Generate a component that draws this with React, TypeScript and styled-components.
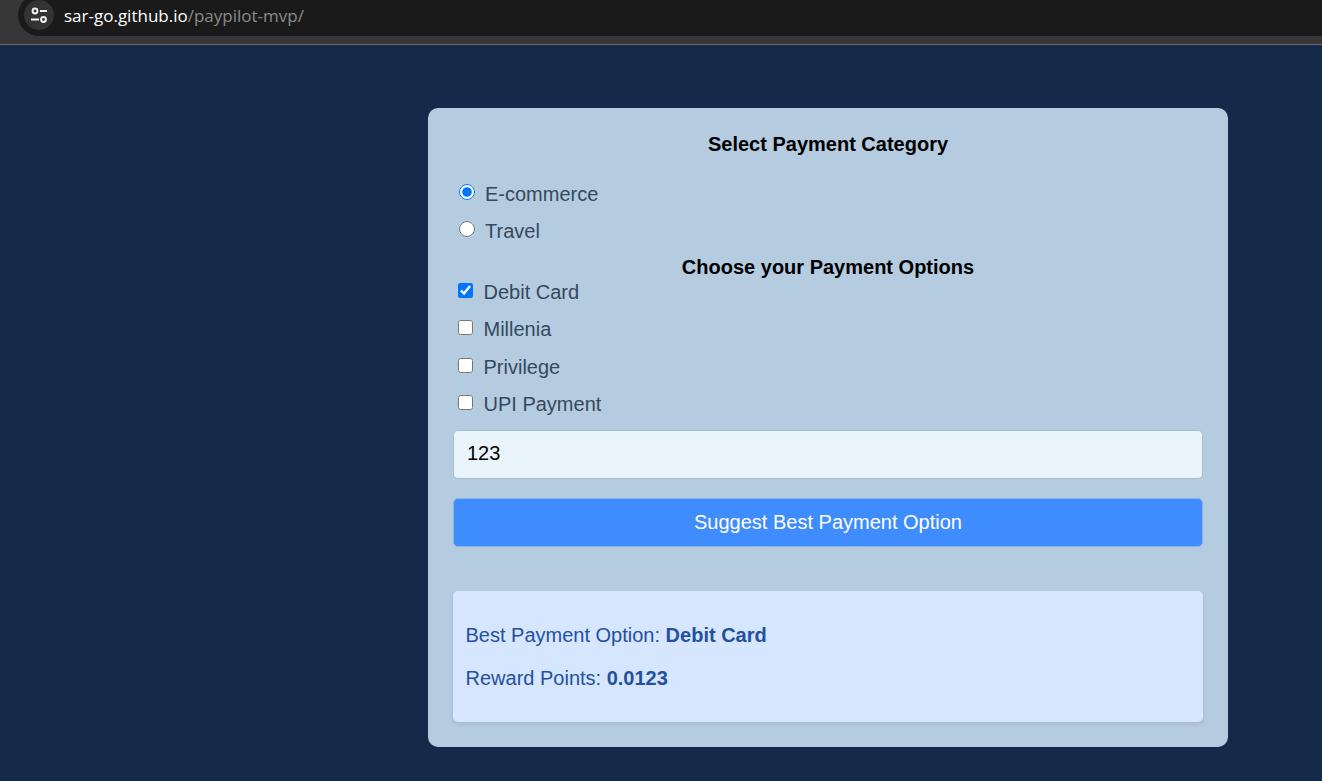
import React from 'react';
import styled, { createGlobalStyle } from 'styled-components';

const GlobalStyle = createGlobalStyle`
  html, body {
    margin: 0;
    padding: 0;
    height: 100%;
    background: #152a4a;
    overflow: hidden;
    font-family: "Liberation Sans", Arial, sans-serif;
  }
`;

const BrowserChrome = styled.div`
  height: 45px;
  box-sizing: border-box;
  background: #373737;
  border-bottom: 1px solid #6a6a6a;
  overflow: hidden;
  padding-left: 18px;
`;

const AddressPill = styled.div`
  height: 42px;
  margin-top: -6px;
  box-sizing: border-box;
  background: #1a1a1a;
  border-radius: 21px 0 0 21px;
  display: flex;
  align-items: center;
  padding-left: 6px;
  gap: 10px;
  font-family: "Open Sans", "Liberation Sans", sans-serif;
  font-size: 17px;
`;

const SiteIcon = styled.div`
  width: 30px;
  height: 30px;
  border-radius: 50%;
  background: #333333;
  display: flex;
  align-items: center;
  justify-content: center;
`;

const Url = styled.span`
  color: #ffffff;
  span {
    color: #8a8a8a;
  }
`;

const Page = styled.main`
  padding: 63px 0 0 428px;
`;

const Card = styled.section`
  width: 800px;
  height: 639px;
  box-sizing: border-box;
  background: #b5cbdf;
  border-radius: 10px;
  padding: 25px;
  color: #34495e;
  font-size: 20px;
`;

const Heading = styled.h2`
  margin: 0;
  font-size: 20px;
  line-height: 23px;
  font-weight: bold;
  color: #000000;
  text-align: center;
`;

const RadioGroup = styled.div`
  margin: 27px 0 13px;
  display: flex;
  flex-direction: column;
  gap: 14px;
`;

const CheckGroup = styled.div`
  margin: 1.5px 0 14px;
  display: flex;
  flex-direction: column;
  gap: 14.5px;
`;

const OptionRow = styled.label`
  display: flex;
  align-items: center;
  height: 23px;
  line-height: 23px;
  padding-left: 5px;
`;

const Radio = styled.input.attrs({ type: 'radio' })`
  width: 16px;
  height: 16px;
  margin: 0 10px 5px 1px;
`;

const Checkbox = styled.input.attrs({ type: 'checkbox' })`
  width: 15px;
  height: 15px;
  margin: 0 10.5px 4px 0;
`;

const AmountInput = styled.input`
  display: block;
  width: 100%;
  height: 48.5px;
  box-sizing: border-box;
  padding: 0 13px 1px;
  background: #eaf5fb;
  border: 1px solid #a5bdd3;
  border-radius: 5px;
  font: 20px "Liberation Sans", Arial, sans-serif;
  color: #000000;
`;

const SubmitButton = styled.button`
  display: block;
  width: 100%;
  height: 48.5px;
  margin-top: 19.5px;
  background: #3f8cff;
  color: #ffffff;
  border: 1px solid #8db4e8;
  border-radius: 5px;
  font: 20px "Liberation Sans", Arial, sans-serif;
`;

const ResultBox = styled.div`
  margin-top: 44.5px;
  height: 131px;
  box-sizing: border-box;
  padding: 33px 12.5px 0;
  background: #d6e6ff;
  border-radius: 5px;
  box-shadow: 0 2px 4px rgba(0, 0, 0, 0.1);
  color: #2450a0;
`;

const ResultLine = styled.p`
  margin: 0 0 20px;
  line-height: 23px;
`;

const categories = [
  { label: 'E-commerce', checked: true },
  { label: 'Travel', checked: false },
];

const paymentOptions = [
  { label: 'Debit Card', checked: true },
  { label: 'Millenia', checked: false },
  { label: 'Privilege', checked: false },
  { label: 'UPI Payment', checked: false },
];

export default function App() {
  return (
    <>
      <GlobalStyle />
      <BrowserChrome>
        <AddressPill>
          <SiteIcon>
            <svg width="18" height="18" viewBox="0 0 18 18" fill="none" stroke="#f0f0f0" strokeWidth="2">
              <circle cx="5" cy="5" r="2.4" />
              <path d="M10 5h7" />
              <path d="M1 13.5h8" />
              <circle cx="13.5" cy="13.5" r="2.4" />
            </svg>
          </SiteIcon>
          <Url>
            sar-go.github.io<span>/paypilot-mvp/</span>
          </Url>
        </AddressPill>
      </BrowserChrome>
      <Page>
        <Card>
          <Heading>Select Payment Category</Heading>
          <RadioGroup>
            {categories.map((c) => (
              <OptionRow key={c.label}>
                <Radio name="category" defaultChecked={c.checked} />
                {c.label}
              </OptionRow>
            ))}
          </RadioGroup>
          <Heading>Choose your Payment Options</Heading>
          <CheckGroup>
            {paymentOptions.map((o) => (
              <OptionRow key={o.label}>
                <Checkbox defaultChecked={o.checked} />
                {o.label}
              </OptionRow>
            ))}
          </CheckGroup>
          <AmountInput defaultValue="123" />
          <SubmitButton>Suggest Best Payment Option</SubmitButton>
          <ResultBox>
            <ResultLine>
              Best Payment Option: <strong>Debit Card</strong>
            </ResultLine>
            <ResultLine>
              Reward Points: <strong>0.0123</strong>
            </ResultLine>
          </ResultBox>
        </Card>
      </Page>
    </>
  );
}
